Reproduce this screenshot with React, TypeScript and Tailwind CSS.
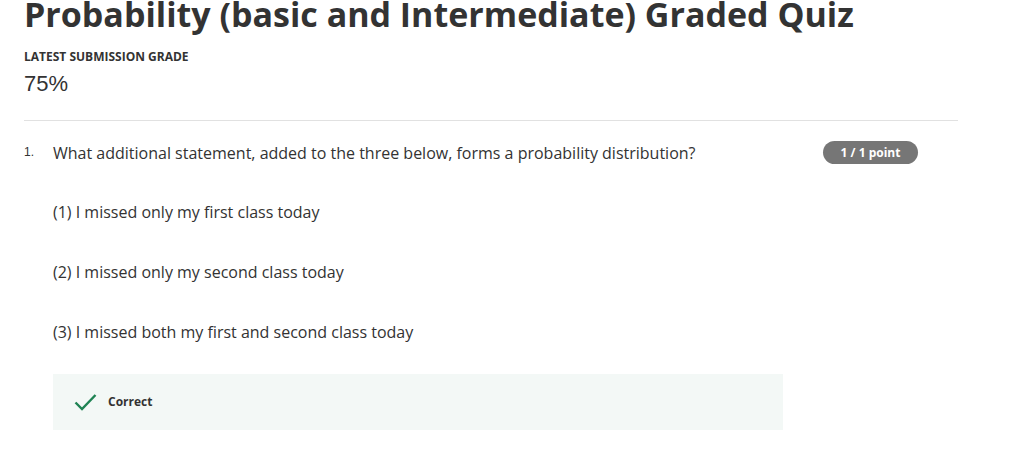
import React from 'react';

const OPTIONS = [
  '(1) I missed only my first class today',
  '(2) I missed only my second class today',
  '(3) I missed both my first and second class today',
];

export default function App() {
  return (
    <div
      className="w-[1014px] h-[463px] overflow-hidden bg-white text-[#333333]"
      style={{ fontFamily: '"Open Sans", sans-serif' }}
    >
      <div className="pl-6 pr-[56px]">
        <h1 className="text-[34px] font-bold leading-[34px] -mt-[3px] text-[#333333] whitespace-nowrap">
          Probability (basic and Intermediate) Graded Quiz
        </h1>
        <div className="mt-[18px] text-[12px] font-bold uppercase leading-4 text-[#333333]">
          Latest Submission Grade
        </div>
        <div
          className="mt-[5px] text-[22px] leading-[28px] text-[#333333]"
          style={{ fontFamily: '"Liberation Sans", Arial, sans-serif' }}
        >
          75%
        </div>
        <div className="mt-[22px] h-px bg-[#e1e1e1]" />

        <div className="flex items-start pt-[19px]">
          <div
            className="w-[29px] text-[12px] leading-[24px] text-[#333333]"
            style={{ fontFamily: '"Liberation Sans", Arial, sans-serif' }}
          >
            1.
          </div>
          <div className="flex-1">
            <div className="flex items-start justify-between">
              <div className="text-[16px] leading-[26px] text-[#333333]">
                What additional statement, added to the three below, forms a probability distribution?
              </div>
              <div className="mr-[40px] mt-px h-[23px] w-[95px] rounded-full bg-[#767676] text-white text-[12px] font-bold flex items-center justify-center">
                1 / 1 point
              </div>
            </div>
            <div className="mt-[33px] flex flex-col gap-[34px]">
              {OPTIONS.map((o) => (
                <div key={o} className="text-[16px] leading-[26px] text-[#333333]">
                  {o}
                </div>
              ))}
            </div>
            <div className="mt-[29px] w-[730px] h-[56px] bg-[#f3f8f6] flex items-center pl-[21px] gap-[11px]">
              <svg width="23" height="18" viewBox="0 0 23 18" fill="none">
                <path d="M1.5 9.5 L8 16 L21.5 2" stroke="#1f8354" strokeWidth="2.4" />
              </svg>
              <span className="text-[12px] font-bold text-[#333333]">Correct</span>
            </div>
          </div>
        </div>
      </div>
    </div>
  );
}
